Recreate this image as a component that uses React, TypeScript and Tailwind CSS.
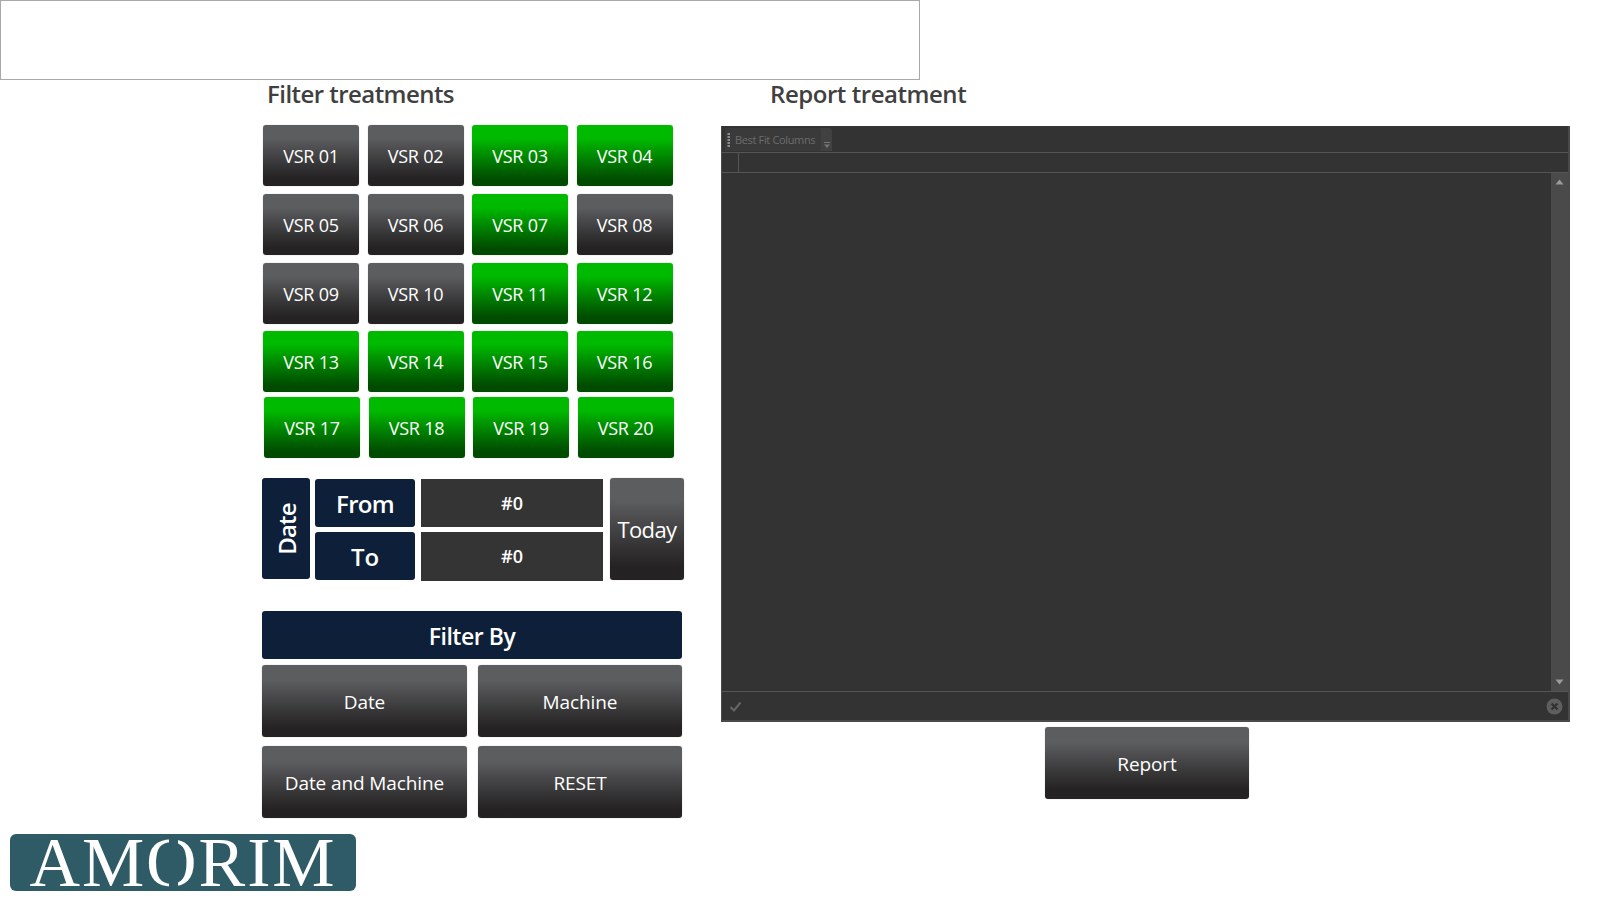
const green = new Set([3, 4, 7, 11, 12, 13, 14, 15, 16, 17, 18, 19, 20]);

const grayBtn = "bg-gradient-to-b from-[#5c5d5f] from-[22%] to-[#242223] to-[88%] shadow-[0_0_1px_#999] rounded-[3px] text-white flex items-center justify-center";
const greenBtn = "bg-gradient-to-b from-[#00ba00] from-[22%] to-[#004b00] to-[90%] shadow-[0_0_1px_#999] rounded-[3px] text-white flex items-center justify-center";

function Vsr({ n }: { n: number }) {
  const label = "VSR " + String(n).padStart(2, "0");
  return (
    <div className={(green.has(n) ? greenBtn : grayBtn) + " w-[96px] h-[61px] pt-[2px] text-[18px] tracking-[-0.25px]"}>
      {label}
    </div>
  );
}

function Row({ start, className }: { start: number; className: string }) {
  return (
    <div className={"flex gap-[8.5px] " + className}>
      {[0, 1, 2, 3].map((i) => (
        <Vsr key={i} n={start + i} />
      ))}
    </div>
  );
}

const navy = "bg-[#0e2039] rounded-[3px] text-white flex items-center justify-center";

function Logo() {
  return (
    <div className="ml-[10px] mt-[16px] w-[346px] h-[57px] bg-[#2e5b66] rounded-[6px] flex items-center justify-center">
      <span className="text-white text-[70px] leading-[57px] tracking-[1.9px] font-['Liberation_Serif',serif]">
        AM<span className="inline-block [mask-image:linear-gradient(90deg,#000_43%,transparent_43%,transparent_60%,#000_60%)]">O</span>RIM
      </span>
    </div>
  );
}

export default function App() {
  return (
    <div className="w-[1600px] h-[900px] bg-white overflow-hidden font-['Open_Sans',sans-serif]">
      <div className="w-[920px] h-[80px] border border-[#a8a8a8]" />
      <div className="flex">
        <div className="ml-[262px] w-[422px] flex flex-col">
          <div className="ml-[5px] h-[28px] flex items-center text-[24px] leading-none font-semibold text-[#404040] tracking-[-0.55px]">
            Filter treatments
          </div>
          <Row start={1} className="ml-[1px] mt-[17px]" />
          <Row start={5} className="ml-[1px] mt-[8px]" />
          <Row start={9} className="ml-[1px] mt-[8px]" />
          <Row start={13} className="ml-[1px] mt-[7px]" />
          <Row start={17} className="ml-[2px] mt-[5px]" />

          <div className="flex mt-[20px] h-[103px]">
            <div className={navy + " w-[48px] h-[101px] pl-[2px] text-[24px] font-semibold"}>
              <span className="-rotate-90 tracking-[-0.8px]">Date</span>
            </div>
            <div className="ml-[5px] flex flex-col gap-[5px] pt-px">
              <div className={navy + " w-[100px] h-[48px] pt-[2px] text-[24px] font-semibold tracking-[-0.7px]"}>From</div>
              <div className={navy + " w-[100px] h-[48px] pt-[2px] text-[24px] font-semibold"}>To</div>
            </div>
            <div className="ml-[6px] flex flex-col gap-[5px] pt-px">
              <div className="w-[182px] h-[48px] bg-[#343434] text-white flex items-center justify-center text-[18px] font-semibold">#0</div>
              <div className="w-[182px] h-[49px] bg-[#343434] text-white flex items-center justify-center text-[18px] font-semibold">#0</div>
            </div>
            <div className={grayBtn + " ml-[7px] w-[74px] h-[102px] text-[22px] font-medium tracking-[-0.6px]"}>Today</div>
          </div>

          <div className={navy + " mt-[30px] w-[420px] h-[48px] pt-[2px] text-[23px] font-semibold tracking-[-0.45px]"}>Filter By</div>
          <div className="mt-[6px] w-[420px] grid grid-cols-[205px_204px] gap-x-[11px] gap-y-[9px]">
            {["Date", "Machine", "Date and Machine", "RESET"].map((t) => (
              <div key={t} className={grayBtn + " h-[72px] pt-[2px] text-[19px] tracking-[-0.1px]"}>{t}</div>
            ))}
          </div>
        </div>

        <div className="ml-[37px] w-[849px] flex flex-col">
          <div className="ml-[49px] h-[28px] flex items-center text-[24px] leading-none font-semibold text-[#404040] tracking-[-0.45px]">
            Report treatment
          </div>
          <div className="mt-[18px] h-[596px] bg-[#333333] border-r-2 border-b-2 border-l border-[#4a4a4a] border-t-0 flex flex-col">
            <div className="h-[27px] border-b border-[#555555] flex items-end pl-[3px] pb-px">
              <div className="h-[23px] w-[107px] flex rounded-t-[3px] bg-[#414141]">
                <div className="w-[96px] flex items-center bg-[#3a3a3a] rounded-[3px] pl-[2px] pt-[2px]">
                  <svg width="4" height="16" viewBox="0 0 4 16" className="mr-[4px] -mt-[2px]">
                    {[1, 4, 7, 10, 13].map((y) => (
                      <rect key={y} x="0.5" y={y} width="2.5" height="2" fill="#8a8a8a" />
                    ))}
                  </svg>
                  <span className="text-[11px] text-[#6c6c6c] tracking-[-0.35px] whitespace-nowrap">Best Fit Columns</span>
                </div>
                <div className="flex-1 flex items-end justify-center pb-[2px]">
                  <svg width="8" height="8" viewBox="0 0 8 8">
                    <rect x="1" y="1" width="6" height="1" fill="#777" />
                    <path d="M1 3.5h6L4 7z" fill="#777" />
                  </svg>
                </div>
              </div>
            </div>
            <div className="h-[20px] border-b border-[#555555] flex">
              <div className="w-[17px] border-r border-[#555555]" />
            </div>
            <div className="flex-1 flex min-h-0">
              <div className="flex-1" />
              <div className="w-[17px] bg-[#4a4a4a] flex flex-col items-center justify-between pt-[6px] pb-[6px]">
                <svg width="9" height="6" viewBox="0 0 9 6"><path d="M4.5 0.5L8.5 5.5H0.5z" fill="#9a9a9a" /></svg>
                <svg width="9" height="6" viewBox="0 0 9 6"><path d="M0.5 0.5H8.5L4.5 5.5z" fill="#9a9a9a" /></svg>
              </div>
            </div>
            <div className="h-[29px] border-t border-[#555555] flex items-center justify-between pl-[7px] pr-[5px]">
              <svg width="13" height="13" viewBox="0 0 13 13">
                <path d="M1.5 7L5 10.5L11.5 2.5" fill="none" stroke="#666" strokeWidth="2" />
              </svg>
              <svg width="17" height="17" viewBox="0 0 17 17">
                <circle cx="8.5" cy="8.5" r="8" fill="#5e5e5e" />
                <path d="M5.5 5.5L11.5 11.5M11.5 5.5L5.5 11.5" stroke="#333" strokeWidth="2.4" />
              </svg>
            </div>
          </div>
          <div className={grayBtn + " mt-[5px] ml-[324px] w-[204px] h-[72px] pt-[2px] text-[19px] tracking-[-0.1px]"}>Report</div>
        </div>
      </div>
      <Logo />
    </div>
  );
}
